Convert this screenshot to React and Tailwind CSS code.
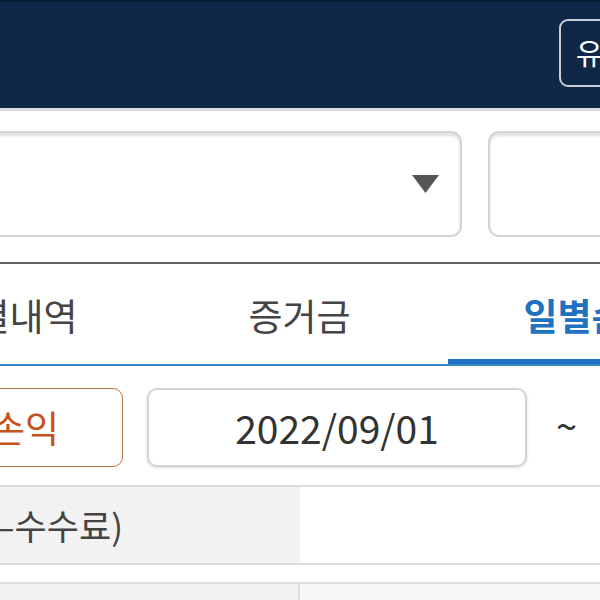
import React, { useState } from 'react';

const tabs = ['체결내역', '증거금', '일별손익'];

const App = () => {
  const [active, setActive] = useState(2);

  return (
    <div
      className="w-[600px] h-[600px] overflow-hidden bg-white"
      style={{ fontFamily: '"Noto Sans CJK KR", "Noto Sans", sans-serif' }}
    >
      {/* Header */}
      <div className="h-[108px] bg-[#0f2848] border-t-2 border-[#091a33] flex items-center justify-end">
        <button className="h-[68px] w-[130px] mr-[-89px] mt-[-4px] border-2 border-[#c9ced6] rounded-[9px] text-white text-[29px] flex items-center pl-[15px] whitespace-nowrap">
          유의사항
        </button>
      </div>
      <div className="h-[3px] bg-[#dadada]" />

      {/* Select row */}
      <div className="flex gap-[26px] mt-[20px] ml-[-40px]">
        <div className="w-[502px] h-[106px] shrink-0 border-2 border-[#d4d4d4] rounded-[11px] shadow-[inset_0_3px_3px_rgba(0,0,0,0.12)] flex items-center justify-end pr-[21px]">
          <svg width="27" height="18" viewBox="0 0 27 18">
            <polygon points="0,0 27,0 13.5,18" fill="#555555" />
          </svg>
        </div>
        <div className="w-[200px] h-[106px] shrink-0 border-2 border-[#d4d4d4] rounded-[11px] shadow-[inset_0_3px_3px_rgba(0,0,0,0.12)]" />
      </div>

      <div className="h-[2px] bg-[#616161] mt-[25px]" />

      {/* Tabs */}
      <div className="flex ml-[-146px] border-b-2 border-[#3a86bf]">
        {tabs.map((t, i) => (
          <button
            key={t}
            onClick={() => setActive(i)}
            className={
              i === active
                ? 'w-[297px] shrink-0 h-[100px] flex items-center justify-center text-[37px] font-bold text-[#1f72c0] border-b-[5px] border-[#1d73c5] mb-[-2px] pt-[9px] pr-[10px]'
                : i === 0
                ? 'w-[297px] shrink-0 h-[100px] flex items-center justify-center text-[37px] text-[#444444] pt-[3px] pl-[14px]'
                : 'w-[297px] shrink-0 h-[100px] flex items-center justify-center text-[37px] text-[#444444] pt-[3px]'
            }
          >
            {t}
          </button>
        ))}
      </div>

      {/* Date row */}
      <div className="flex items-center mt-[22px] ml-[-77px]">
        <button className="w-[200px] h-[79px] shrink-0 border-[1.5px] border-[#bb774b] rounded-[10px] flex items-center justify-end pr-[63px] text-[37px] text-[#c4521a]">
          손익
        </button>
        <div className="w-[380px] h-[79px] shrink-0 ml-[24px] border-2 border-[#d4d4d4] rounded-[10px] shadow-[0_1px_3px_rgba(0,0,0,0.15)] flex items-center justify-center text-[39px] text-[#333333]">
          2022/09/01
        </div>
        <div className="ml-[29px] text-[38px] text-[#333333] mt-[-6px]">~</div>
      </div>

      {/* Table */}
      <div className="mt-[18px] border-t-2 border-[#dcdcdc] flex h-[80px] border-b-2">
        <div className="w-[300px] bg-[#f2f2f2] flex items-center justify-end pr-[177px] text-[35px] text-[#444444] whitespace-nowrap">
          –수수료)
        </div>
        <div className="flex-1 bg-white" />
      </div>
      <div className="mt-[17px] border-t-2 border-[#dcdcdc] flex h-[40px]">
        <div className="w-[300px] bg-[#f2f2f2] border-r-2 border-[#dcdcdc]" />
        <div className="flex-1 bg-[#f6f6f6]" />
      </div>
    </div>
  );
};

export default App;
